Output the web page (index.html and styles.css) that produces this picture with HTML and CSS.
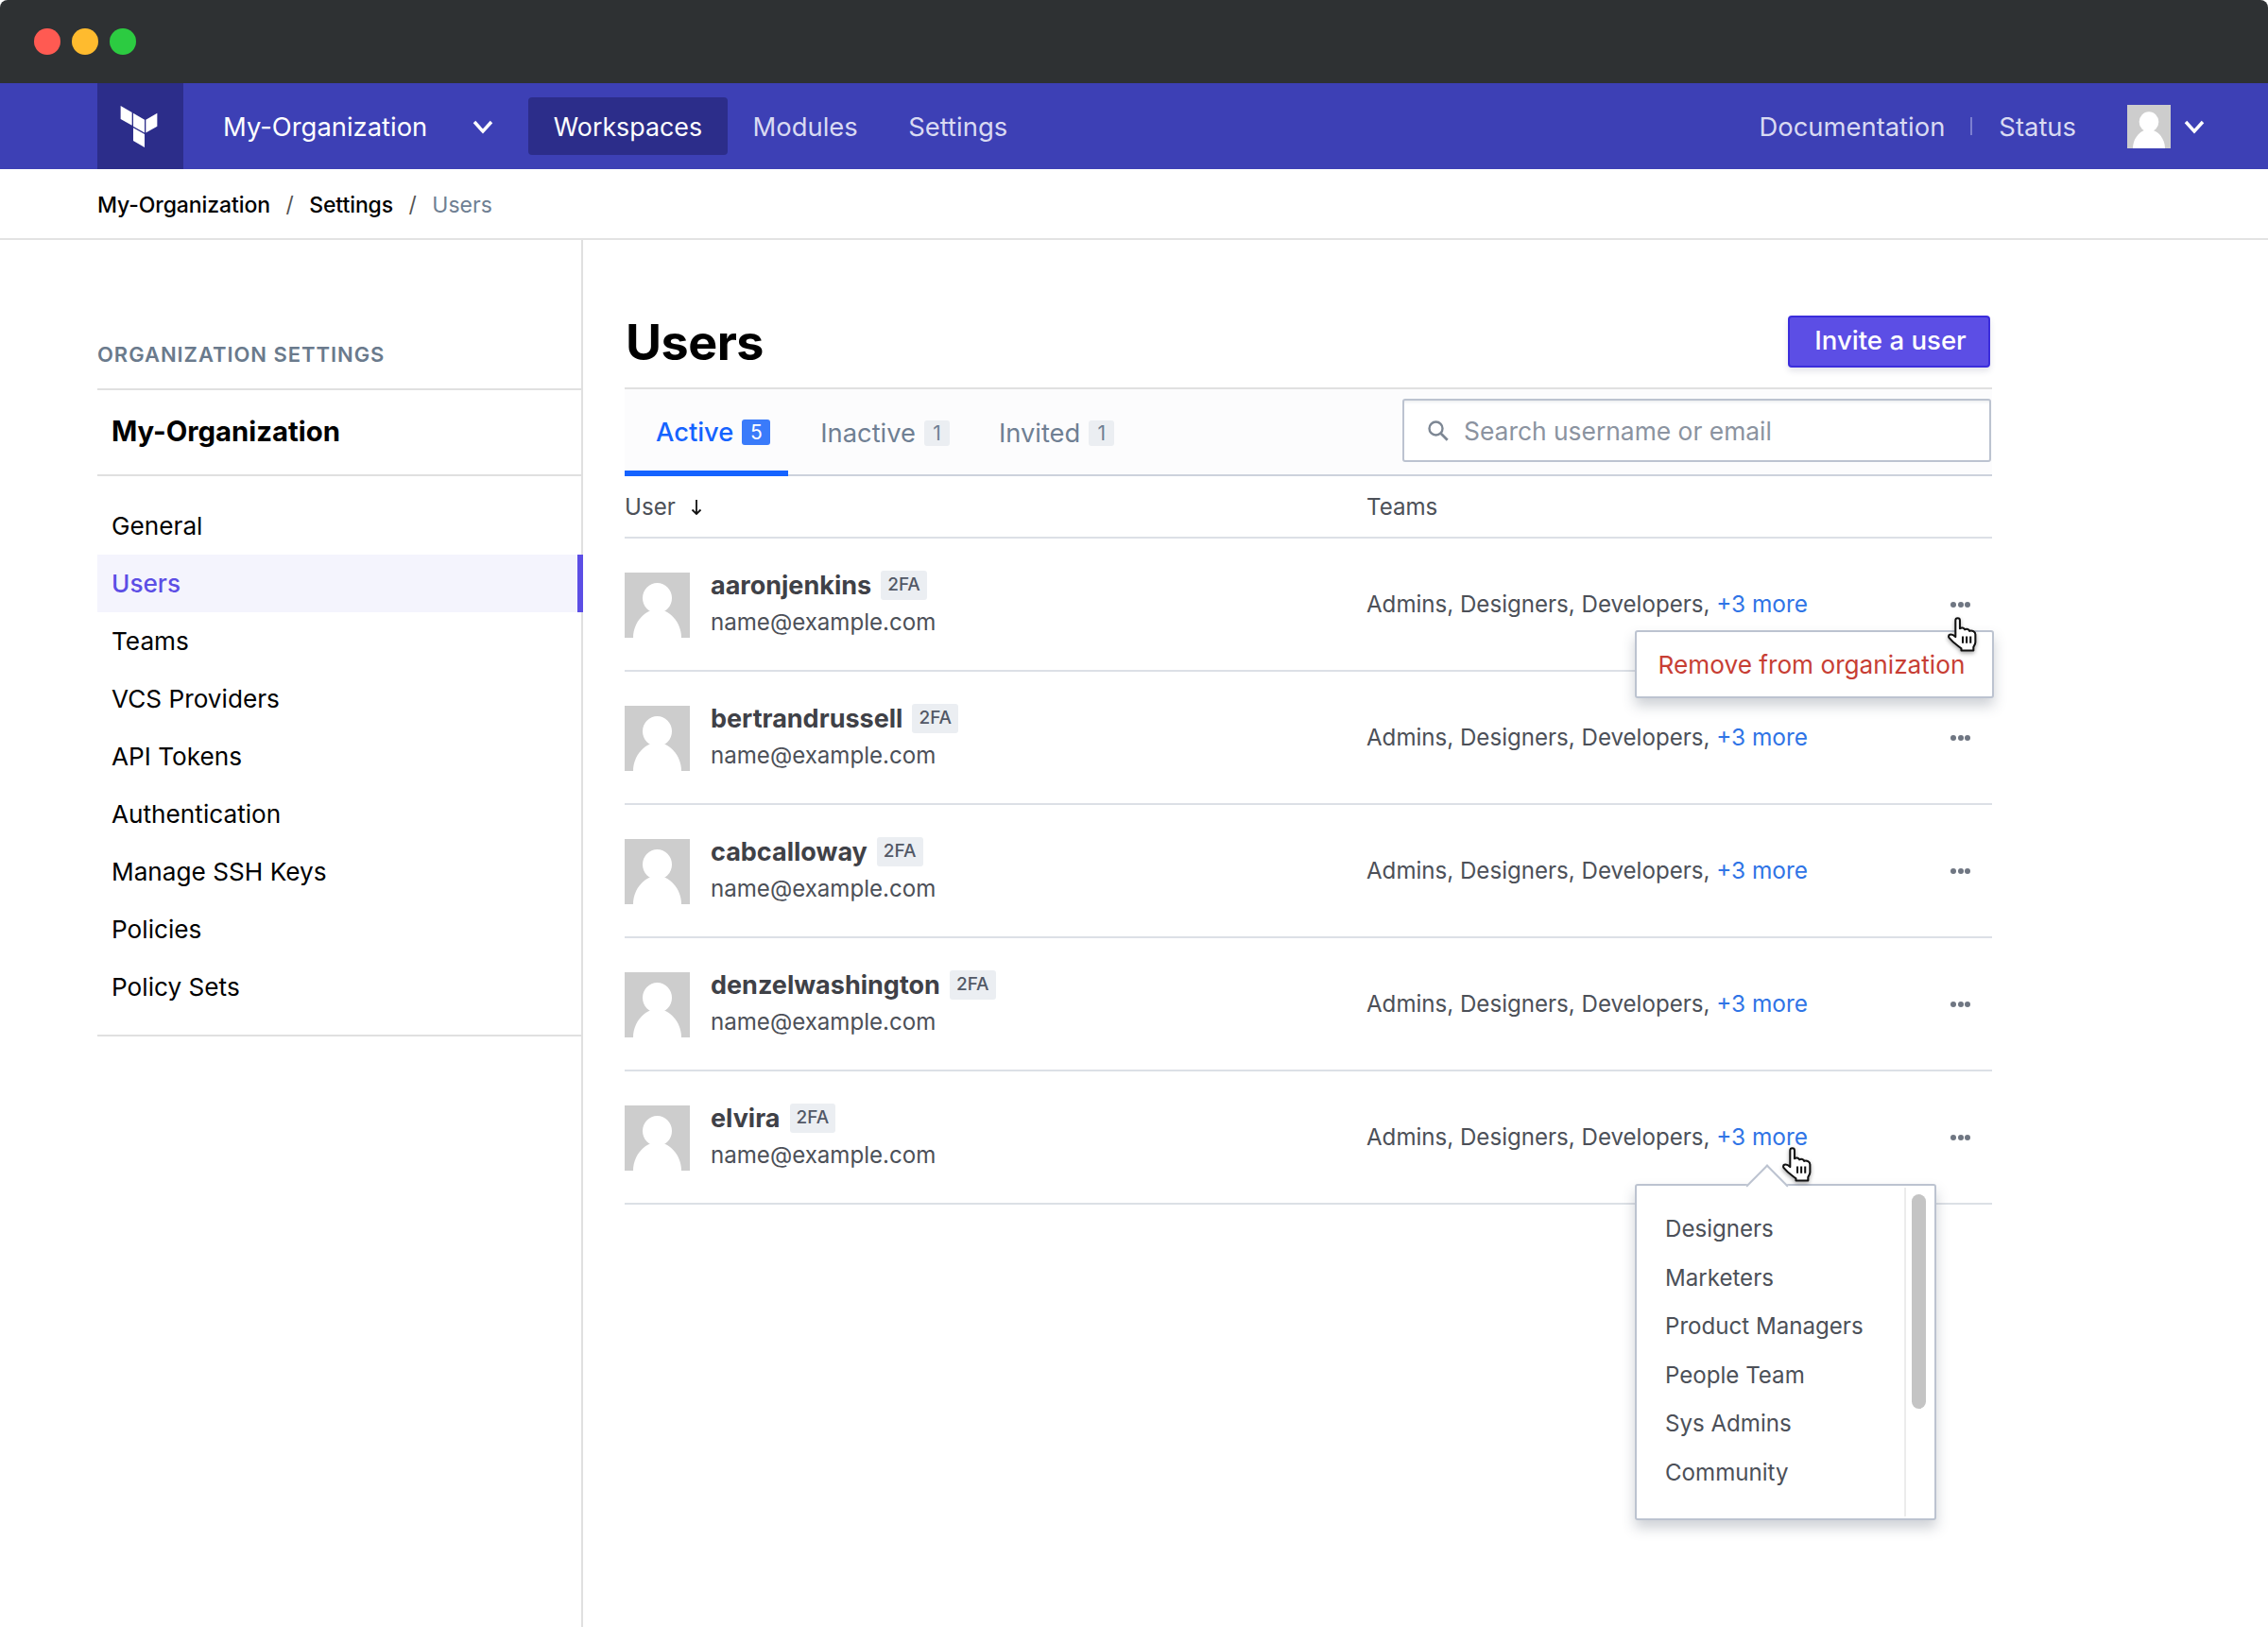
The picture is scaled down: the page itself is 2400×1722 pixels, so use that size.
FILE: index.html
```html
<!DOCTYPE html>
<html lang="en">
<head>
    <meta charset="UTF-8">
    <title>Users</title>
    <link rel="stylesheet" href="styles.css">
</head>
<body>
    <svg class="defs" width="0" height="0">
        <symbol id="avatar" viewBox="0 0 69 69">
            <rect width="69" height="69" fill="#cdcdcd"/>
            <ellipse cx="34.5" cy="27" rx="15.5" ry="16" fill="#fff"/>
            <path d="M9 69C9 52 22 39 34.5 39S60 52 60 69Z" fill="#fff"/>
        </symbol>
        <symbol id="chevron" viewBox="0 0 24 16">
            <path d="M3 3l9 10 9-10" fill="none" stroke="currentColor" stroke-width="3.4"/>
        </symbol>
        <symbol id="hand" viewBox="-1 -1 32 38">
            <path d="M8 3.5C8 .5 12.5 .5 12.5 3.5V12C14 10.5 17 11 17.5 13 19.5 12 22 12.5 22.5 14.5 25 13.5 28.5 15 28.5 18V26C28.5 28 27 30 26.5 31V34.5H14V32.5C11 30 6 27 1.5 21.5-.5 19 3 15.5 8 20.5Z" fill="#fff" stroke="#111" stroke-width="2" stroke-linejoin="round"/>
            <path d="M15.5 20v7M19.5 20v7M23.5 20v7" stroke="#111" stroke-width="2"/>
        </symbol>
    </svg>

    <div class="titlebar">
        <span class="light red"></span>
        <span class="light yellow"></span>
        <span class="light green"></span>
    </div>

    <nav class="topnav">
        <a class="logo">
            <svg width="40" height="44" viewBox="1.44 0 21.12 24"><path fill="#fff" d="M1.44 0v7.575l6.561 3.79V3.787zm21.12 4.227l-6.561 3.791v7.574l6.56-3.787zM8.72 4.23v7.575l6.561 3.787V8.018zm0 8.405v7.575l6.561 3.79v-7.575z"/></svg>
        </a>
        <a class="org-switch">My-Organization</a>
        <svg class="chevron org-chevron"><use href="#chevron"/></svg>
        <a class="nav-link active">Workspaces</a>
        <a class="nav-link">Modules</a>
        <a class="nav-link">Settings</a>
        <div class="nav-right">
            <a class="nav-link plain">Documentation</a>
            <span class="nav-sep"></span>
            <a class="nav-link plain">Status</a>
            <svg class="nav-avatar"><use href="#avatar"/></svg>
            <svg class="chevron"><use href="#chevron"/></svg>
        </div>
    </nav>

    <div class="breadcrumb">
        <a>My-Organization</a><span class="slash">/</span><a>Settings</a><span class="slash">/</span><span class="current">Users</span>
    </div>

    <div class="main">
        <aside class="sidebar">
            <div class="side-label">ORGANIZATION SETTINGS</div>
            <div class="side-org">My-Organization</div>
            <ul class="side-menu">
                <li>General</li>
                <li class="selected">Users</li>
                <li>Teams</li>
                <li>VCS Providers</li>
                <li>API Tokens</li>
                <li>Authentication</li>
                <li>Manage SSH Keys</li>
                <li>Policies</li>
                <li>Policy Sets</li>
            </ul>
        </aside>

        <section class="content">
            <div class="page-head">
                <h1>Users</h1>
                <button class="btn-primary">Invite a user</button>
            </div>

            <div class="tabs">
                <a class="tab active">Active <span class="count">5</span></a>
                <a class="tab">Inactive <span class="count">1</span></a>
                <a class="tab">Invited <span class="count">1</span></a>
                <div class="search">
                    <svg width="24" height="24" viewBox="0 0 24 24"><circle cx="9.5" cy="9.5" r="7" fill="none" stroke="#7d8794" stroke-width="2.4"/><path d="M14.7 14.7l7 7" stroke="#7d8794" stroke-width="2.8"/></svg>
                    <span>Search username or email</span>
                </div>
            </div>

            <div class="table-head">
                <div class="col-user">User
                    <svg class="sort" width="12" height="16" viewBox="0 0 12 16"><path d="M6 0v14.5M1.5 10.5l4.5 4.5 4.5-4.5" fill="none" stroke="#111" stroke-width="1.8"/></svg>
                </div>
                <div>Teams</div>
            </div>

            <div class="row">
                <svg class="avatar"><use href="#avatar"/></svg>
                <div class="user-info">
                    <div class="user-name"><b>aaronjenkins</b><span class="tag">2FA</span></div>
                    <div class="user-mail">name@example.com</div>
                </div>
                <div class="teams">Admins, Designers, Developers, <a>+3 more</a></div>
                <div class="dots"><i></i><i></i><i></i></div>
                <div class="menu-pop">Remove from organization</div>
                <svg class="hand hand-dots"><use href="#hand"/></svg>
            </div>
            <div class="row">
                <svg class="avatar"><use href="#avatar"/></svg>
                <div class="user-info">
                    <div class="user-name"><b>bertrandrussell</b><span class="tag">2FA</span></div>
                    <div class="user-mail">name@example.com</div>
                </div>
                <div class="teams">Admins, Designers, Developers, <a>+3 more</a></div>
                <div class="dots"><i></i><i></i><i></i></div>
            </div>
            <div class="row">
                <svg class="avatar"><use href="#avatar"/></svg>
                <div class="user-info">
                    <div class="user-name"><b>cabcalloway</b><span class="tag">2FA</span></div>
                    <div class="user-mail">name@example.com</div>
                </div>
                <div class="teams">Admins, Designers, Developers, <a>+3 more</a></div>
                <div class="dots"><i></i><i></i><i></i></div>
            </div>
            <div class="row">
                <svg class="avatar"><use href="#avatar"/></svg>
                <div class="user-info">
                    <div class="user-name"><b>denzelwashington</b><span class="tag">2FA</span></div>
                    <div class="user-mail">name@example.com</div>
                </div>
                <div class="teams">Admins, Designers, Developers, <a>+3 more</a></div>
                <div class="dots"><i></i><i></i><i></i></div>
            </div>
            <div class="row">
                <svg class="avatar"><use href="#avatar"/></svg>
                <div class="user-info">
                    <div class="user-name"><b>elvira</b><span class="tag">2FA</span></div>
                    <div class="user-mail">name@example.com</div>
                </div>
                <div class="teams">Admins, Designers, Developers, <a>+3 more</a></div>
                <div class="dots"><i></i><i></i><i></i></div>
                <div class="teams-pop">
                    <ul>
                        <li>Designers</li>
                        <li>Marketers</li>
                        <li>Product Managers</li>
                        <li>People Team</li>
                        <li>Sys Admins</li>
                        <li>Community</li>
                    </ul>
                    <div class="scroll"><span></span></div>
                </div>
                <svg class="hand hand-more"><use href="#hand"/></svg>
            </div>
        </section>
    </div>
</body>
</html>
```

FILE: styles.css
```css
* { box-sizing: border-box; }

html, body {
    margin: 0;
    height: 1722px;
    overflow: hidden;
}
body {
    font-family: Inter, "Liberation Sans", sans-serif;
    font-size: 24.1px;
    color: #000;
    background: #fff;
    display: flex;
    flex-direction: column;
}
ul { list-style: none; margin: 0; padding: 0; }
.defs { position: absolute; }

/* window chrome */
.titlebar {
    height: 88px;
    background: #2e3133;
    border-radius: 8px 8px 0 0;
    display: flex;
    align-items: center;
    gap: 12px;
    padding-left: 36px;
}
.light { width: 28px; height: 28px; border-radius: 50%; }
.red { background: #ff5a52; }
.yellow { background: #ffbb2e; }
.green { background: #2ccb41; }

/* top nav */
.topnav {
    height: 91px;
    background: #3d40b5;
    display: flex;
    align-items: center;
    padding-left: 103px;
    color: #fff;
    font-size: 27.4px;
}
.logo {
    width: 91px;
    height: 91px;
    background: #2c2d8a;
    display: flex;
    align-items: center;
    justify-content: center;
    padding-right: 4px;
}
.org-switch { margin-left: 42px; }
.chevron { width: 24px; height: 16px; color: #fff; }
.org-chevron { margin-left: 47px; margin-right: 36px; }
.nav-link {
    color: #d9daf2;
    padding: 0 26.5px;
    height: 61px;
    line-height: 62px;
    border-radius: 4px;
    margin-right: 0.5px;
}
.nav-link.active { background: #2c2d8a; color: #fff; font-size: 26.8px; }
.nav-link.plain { padding: 0; margin: 0; }
.nav-right {
    margin-left: auto;
    padding-right: 66px;
    display: flex;
    align-items: center;
}
.nav-sep { width: 2px; height: 19px; background: #7c7fd0; margin: 0 28px 0 27px; }
.nav-avatar { width: 46px; height: 46px; margin: 0 13px 0 54px; }

/* breadcrumb */
.breadcrumb {
    height: 75px;
    border-bottom: 2px solid #e3e3e3;
    padding: 2px 0 0 103px;
    display: flex;
    align-items: center;
    font-size: 23px;
}
.breadcrumb a { font-weight: 500; letter-spacing: -0.1px; }
.slash { margin: 0 16.5px; color: #555; }
.current { color: #6f7f93; }

/* layout */
.main { flex: 1; display: flex; }
.sidebar {
    width: 617px;
    padding-left: 103px;
    border-right: 2px solid #e0e0e0;
}
.side-label {
    padding: 108px 0 24px;
    line-height: 26px;
    height: 159px;
    font-size: 22px;
    letter-spacing: 0.95px;
    font-weight: 600;
    color: #6a7a8c;
    border-bottom: 2px solid #e0e0e0;
}
.side-org {
    height: 91px;
    line-height: 88px;
    padding-left: 15px;
    font-size: 29.3px;
    font-weight: 700;
    border-bottom: 2px solid #e0e0e0;
}
.side-menu {
    padding: 22px 0 20px;
    border-bottom: 2px solid #e0e0e0;
    margin-right: -2px;
}
.side-menu li {
    height: 61px;
    line-height: 61px;
    padding-left: 15px;
    font-size: 26.2px;
}
.side-menu li.selected {
    background: #f4f4fd;
    color: #5c4ee5;
    font-weight: 500;
    border-right: 6px solid #5c4ee5;
}

.content { width: 1491px; padding-left: 44px; }
.page-head {
    height: 158px;
    padding: 82px 2px 21px 1px;
    border-bottom: 2px solid #e0e0e0;
    display: flex;
    align-items: center;
    justify-content: space-between;
}
h1 { margin: 0; font-size: 52px; font-weight: 700; letter-spacing: -0.5px; }
.btn-primary {
    width: 214px;
    height: 55px;
    margin-top: -2px;
    padding: 0 0 4px 3px;
    background: #5c4ee5;
    border: 2px solid #3b2ddc;
    border-radius: 4px;
    color: #fff;
    font: 500 27.6px Inter, "Liberation Sans", sans-serif;
    box-shadow: 0 4px 6px rgba(40, 40, 90, 0.12);
}

/* tabs */
.tabs {
    height: 92px;
    background: #fcfcfd;
    border-bottom: 2px solid #ccd2dc;
    display: flex;
    font-size: 27.3px;
    color: #6f7f93;
}
.tab {
    height: 92px;
    padding: 1px 0 0;
    margin-right: 52px;
    display: flex;
    align-items: center;
    gap: 9px;
}
.tab.active {
    color: #1563ff;
    font-weight: 500;
    padding: 4px 19px 0 33px;
    margin-right: 34px;
    border-bottom: 6px solid #1563ff;
}
.count {
    width: 27px;
    height: 27px;
    line-height: 27px;
    border-radius: 3px;
    background: #ebeef2;
    font-size: 21px;
    font-weight: 400;
    text-align: center;
}
.tab.active .count { width: 30px; background: #3a7bfa; color: #fff; }
.search {
    margin: 10px 1px 0 auto;
    width: 623px;
    height: 67px;
    background: #fff;
    border: 2px solid #bcc3d0;
    border-radius: 3px;
    box-shadow: inset 0 4px 3px -2px #eef0f2;
    display: flex;
    align-items: center;
    gap: 15px;
    padding-left: 24px;
    font-size: 26.4px;
    color: #8b93a0;
}

/* table */
.table-head {
    height: 66px;
    border-bottom: 2px solid #dce0e6;
    display: flex;
    align-items: center;
    padding-top: 1px;
    color: #4c5058;
}
.col-user { width: 785px; display: flex; align-items: center; gap: 16px; }
.row {
    position: relative;
    height: 141px;
    padding-top: 1px;
    border-bottom: 2px solid #dce0e6;
    display: flex;
    align-items: center;
}
.avatar { width: 69px; height: 69px; margin-right: 22px; flex: none; }
.user-info { width: 694px; margin-bottom: 3.5px; }
.user-name {
    display: flex;
    align-items: center;
    gap: 10px;
    height: 32px;
    margin-bottom: 9px;
    font-size: 27px;
    color: #3f4147;
}
.tag {
    height: 31px;
    line-height: 30px;
    padding: 0 7px;
    background: #ebeef2;
    border-radius: 3px;
    font-size: 19px;
    font-weight: 500;
    color: #525866;
}
.user-mail, .teams { color: #4c5058; }
.teams { margin-bottom: 2px; }
.teams a { color: #2f74e6; font-size: 24.4px; }
.dots {
    position: absolute;
    left: 1403px;
    top: 67px;
    display: flex;
    gap: 1.5px;
}
.dots i { width: 6px; height: 6px; border-radius: 50%; background: #6f7682; }

/* popovers */
.menu-pop {
    position: absolute;
    z-index: 2;
    left: 1069px;
    top: 97px;
    width: 380px;
    height: 72px;
    line-height: 69px;
    padding-right: 6px;
    text-align: center;
    background: #fff;
    border: 2px solid #bcc3d0;
    border-radius: 3px;
    color: #c73e34;
    font-size: 26.2px;
    box-shadow: 0 8px 14px rgba(60, 70, 90, 0.25);
}
.teams-pop {
    position: absolute;
    z-index: 2;
    left: 1069px;
    top: 119px;
    width: 319px;
    height: 356px;
    background: #fff;
    border: 2px solid #bcc3d0;
    border-radius: 3px;
    box-shadow: 0 8px 14px rgba(60, 70, 90, 0.25);
    display: flex;
    justify-content: space-between;
}
.teams-pop::before {
    content: "";
    position: absolute;
    left: 122px;
    top: -16px;
    width: 30px;
    height: 30px;
    background: #fff;
    border: solid #bcc3d0;
    border-width: 2px 0 0 2px;
    transform: rotate(45deg);
}
.teams-pop ul {
    position: relative;
    padding: 20px 0 0 30px;
    color: #4c5058;
}
.teams-pop li { height: 51.5px; line-height: 51.5px; }
.scroll {
    position: relative;
    width: 32px;
    margin: 2px 0;
    border-left: 2px solid #ececec;
    padding: 7px 7px 0 6px;
}
.scroll span {
    display: block;
    width: 15px;
    height: 227px;
    background: #c4c4c4;
    border-radius: 8px;
}
.hand {
    position: absolute;
    z-index: 3;
    width: 33px;
    height: 39px;
    filter: drop-shadow(0 2px 2px rgba(0, 0, 0, 0.35));
}
.hand-dots { left: 1399px; top: 82px; }
.hand-more { left: 1224px; top: 79px; }
```
